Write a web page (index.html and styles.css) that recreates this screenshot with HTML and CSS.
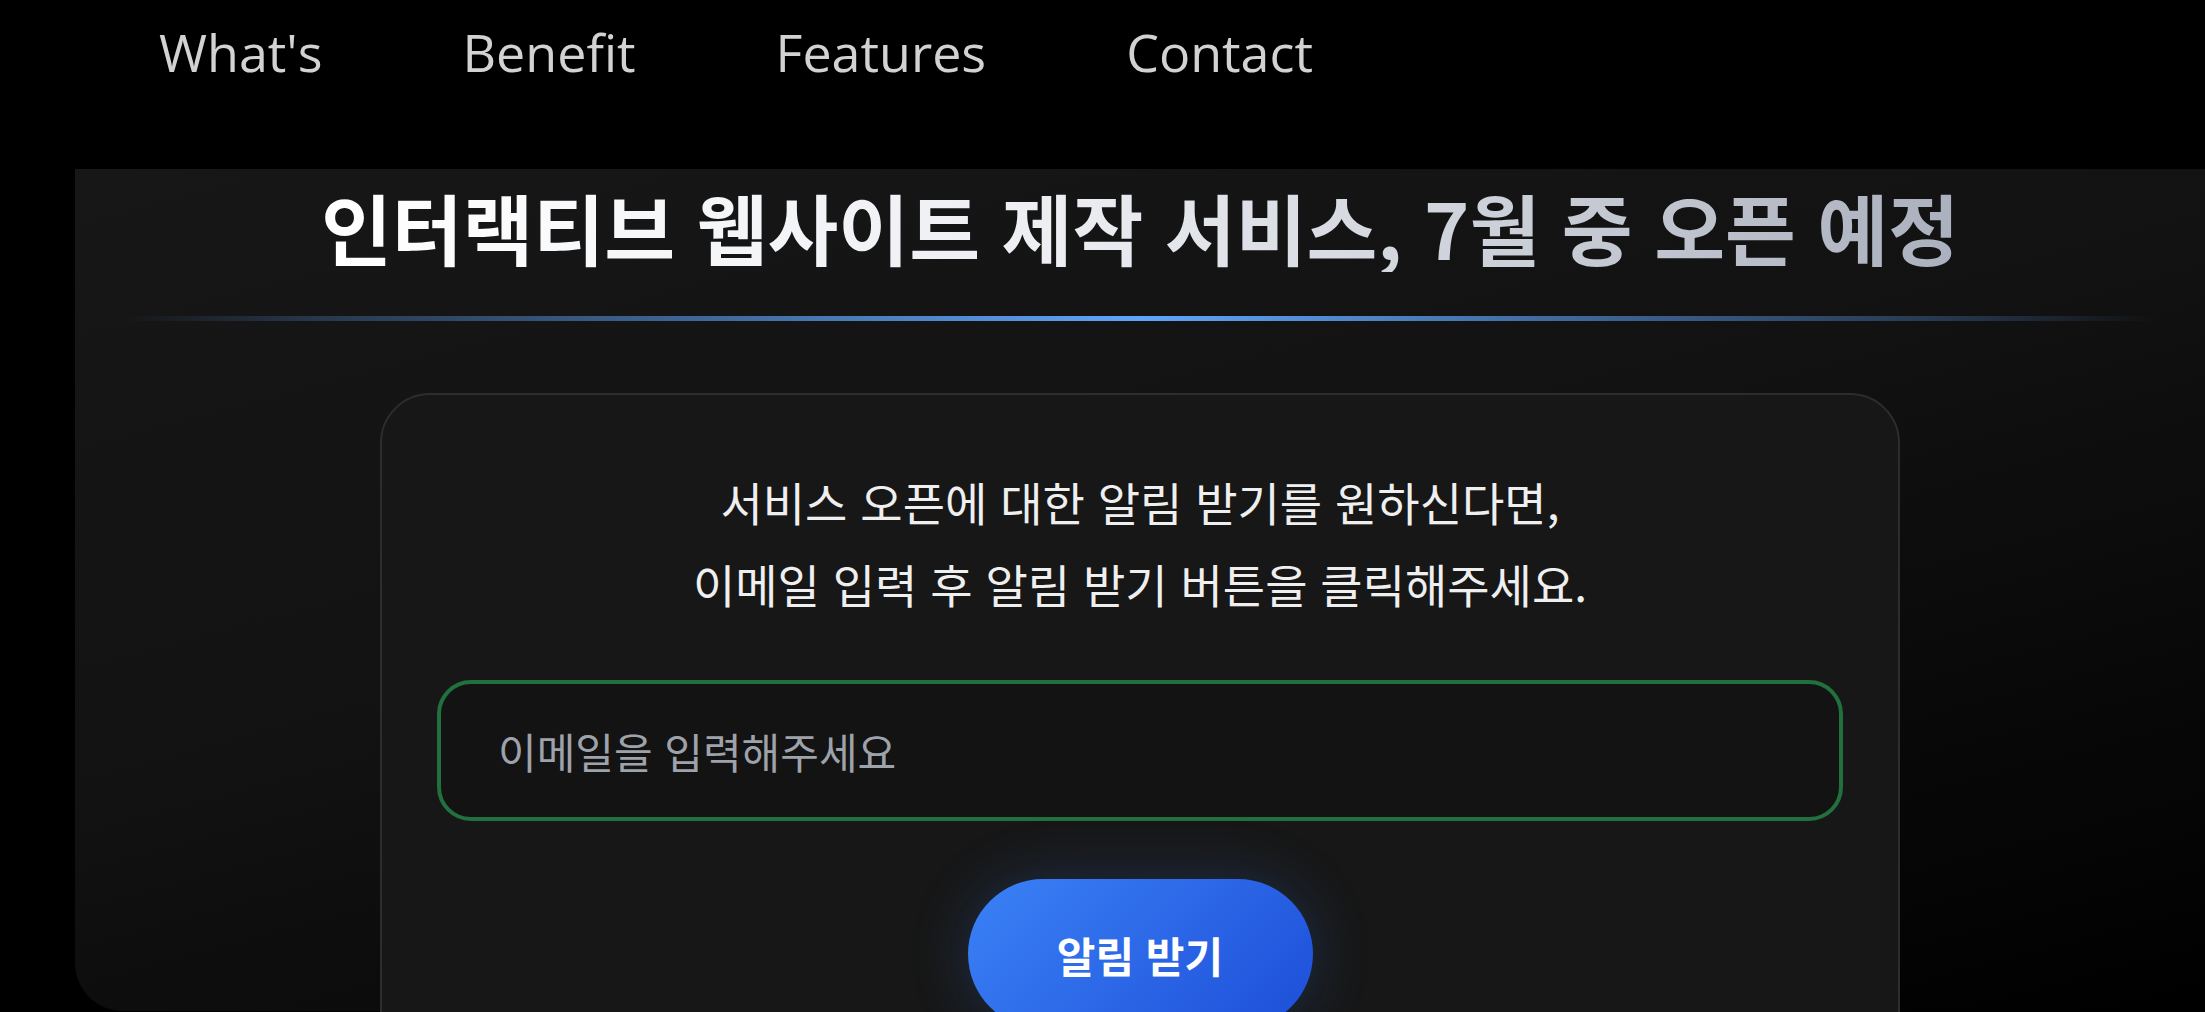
FILE: index.html
```html
<!DOCTYPE html>
<html lang="ko">
<head>
<meta charset="utf-8">
<title>인터랙티브 웹사이트 제작 서비스</title>
<link rel="stylesheet" href="styles.css">
</head>
<body>
<header class="site-header">
  <nav class="nav">
    <a class="nav-link" href="#whats">What's</a>
    <a class="nav-link" href="#benefit">Benefit</a>
    <a class="nav-link" href="#features">Features</a>
    <a class="nav-link" href="#contact">Contact</a>
  </nav>
</header>
<main class="panel">
  <h1 class="title">인터랙티브 웹사이트 제작 서비스, 7월 중 오픈 예정</h1>
  <div class="divider"></div>
  <section class="card">
    <p class="card-text">서비스 오픈에 대한 알림 받기를 원하신다면,<br>이메일 입력 후 알림 받기 버튼을 클릭해주세요.</p>
    <input class="email" type="email" placeholder="이메일을 입력해주세요">
    <button class="notify-btn" type="button">알림 받기</button>
  </section>
</main>
</body>
</html>
```

FILE: styles.css
```css
* {
  box-sizing: border-box;
}

html, body {
  margin: 0;
  padding: 0;
  background: #000;
  height: 100%;
  overflow: hidden;
}

body {
  font-family: "Noto Sans CJK KR", "Noto Sans", sans-serif;
  color: #ececec;
}

.site-header {
  height: 169px;
  background: #000;
}

.nav {
  display: flex;
  gap: 140px;
  padding: 26px 0 0 159px;
}

.nav-link {
  font-family: "Open Sans", "Noto Sans", sans-serif;
  font-size: 52px;
  line-height: 52px;
  color: #d2d2d2;
  text-decoration: none;
}

.panel {
  margin-left: 75px;
  height: 842px;
  border-bottom-left-radius: 48px;
  background: linear-gradient(165deg, #171717 0%, #121212 45%, #000 100%);
  padding: 12px 48px 0 48px;
  display: flex;
  flex-direction: column;
  align-items: center;
}

.panel > * {
  flex-shrink: 0;
}

.title {
  margin: 0;
  font-size: 77px;
  line-height: 91px;
  font-weight: 700;
  background: linear-gradient(90deg, #ffffff 0%, #eceef2 45%, #aab0bd 100%);
  -webkit-background-clip: text;
  background-clip: text;
  color: transparent;
  white-space: nowrap;
}

.divider {
  align-self: stretch;
  height: 5px;
  margin-top: 44px;
  background: linear-gradient(90deg, rgba(96, 165, 250, 0) 0%, rgba(96, 165, 250, 0.25) 10%, rgba(96, 165, 250, 0.6) 30%, #60a5fa 50%, rgba(96, 165, 250, 0.6) 70%, rgba(96, 165, 250, 0.25) 90%, rgba(96, 165, 250, 0) 100%);
}

.card {
  margin-top: 72px;
  width: 1520px;
  height: 720px;
  background: #171717;
  border: 2px solid #2d2d2d;
  border-radius: 50px;
  padding: 65px 55px 0 55px;
  display: flex;
  flex-direction: column;
  align-items: center;
}

.card > * {
  flex-shrink: 0;
}

.card-text {
  margin: 0;
  font-size: 46px;
  line-height: 82px;
  font-weight: 400;
  color: #efefef;
  text-align: center;
}

.email {
  margin-top: 56px;
  align-self: stretch;
  height: 141px;
  border: 4px solid #21703d;
  border-radius: 34px;
  background: #131313;
  padding: 0 57px;
  font-family: "Noto Sans CJK KR", "Noto Sans", sans-serif;
  font-size: 42px;
  color: #ececec;
  outline: none;
}

.email::placeholder {
  color: #9ea2aa;
}

.notify-btn {
  margin-top: 58px;
  width: 345px;
  height: 150px;
  border: none;
  border-radius: 75px;
  background: linear-gradient(135deg, #3b82f6 0%, #1d4ed8 100%);
  box-shadow: 0 0 60px rgba(59, 130, 246, 0.22);
  font-family: "Noto Sans CJK KR", "Noto Sans", sans-serif;
  font-size: 42px;
  font-weight: 700;
  color: #fff;
  padding: 0;
}
```
